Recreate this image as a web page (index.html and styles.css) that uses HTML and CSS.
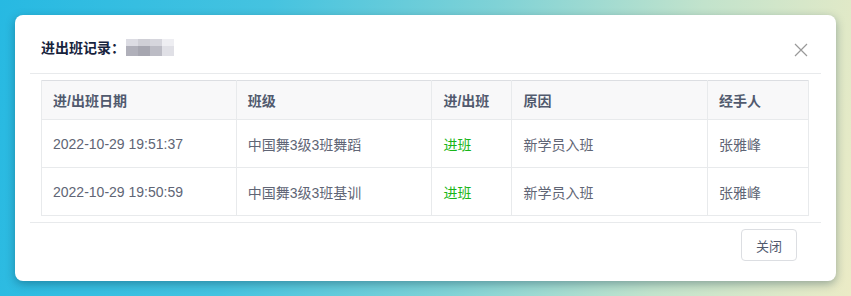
FILE: index.html
```html
<!DOCTYPE html>
<html lang="zh">
<head>
<meta charset="utf-8">
<link rel="stylesheet" href="styles.css">
</head>
<body>
<div class="modal">
  <div class="modal-header">
    <div class="title">进出班记录：<span class="mosaic"><i class="m1"></i><i class="m2"></i><i class="m3"></i><i class="m4"></i><i class="m5"></i><i class="m6"></i><i class="m7"></i><i class="m8"></i></span></div>
    <svg class="close" width="14" height="14" viewBox="0 0 14 14"><path d="M1 1L13 13M13 1L1 13" stroke="#999" stroke-width="1.2" fill="none"/></svg>
  </div>
  <div class="modal-body">
    <table class="tbl">
      <colgroup><col class="c1"><col class="c2"><col class="c3"><col class="c4"><col class="c5"></colgroup>
      <thead>
        <tr><th>进/出班日期</th><th>班级</th><th>进/出班</th><th>原因</th><th>经手人</th></tr>
      </thead>
      <tbody>
        <tr><td>2022-10-29 19:51:37</td><td>中国舞3级3班舞蹈</td><td class="green">进班</td><td>新学员入班</td><td>张雅峰</td></tr>
        <tr><td>2022-10-29 19:50:59</td><td>中国舞3级3班基训</td><td class="green">进班</td><td>新学员入班</td><td>张雅峰</td></tr>
      </tbody>
    </table>
  </div>
  <div class="modal-footer">
    <button class="btn">关闭</button>
  </div>
</div>
</body>
</html>
```
FILE: styles.css
```css
html, body { margin: 0; padding: 0; }
body {
  width: 851px;
  height: 296px;
  overflow: hidden;
  background: linear-gradient(100deg, #27b9e2 0%, #45c3e0 30%, #7fd2d6 55%, #c2e3cc 78%, #ebebc6 100%);
  font-family: "Liberation Sans", "Noto Sans CJK SC", sans-serif;
  padding: 15px 15px 0 15px;
  box-sizing: border-box;
}
.modal {
  width: 821px;
  height: 266px;
  background: #fff;
  border-radius: 8px;
  box-shadow: 0 3px 10px rgba(0, 40, 60, 0.35);
  display: flex;
  flex-direction: column;
}
.modal-header {
  margin: 0 15px;
  height: 59px;
  border-bottom: 1px solid #e8eaec;
  display: flex;
  align-items: center;
  justify-content: space-between;
  box-sizing: border-box;
  padding: 6px 13px 0 11px;
}
.title {
  font-size: 14px;
  font-weight: bold;
  color: #17233d;
  display: flex;
  align-items: center;
}
.mosaic {
  display: grid;
  grid-template-columns: repeat(4, 12px);
  grid-template-rows: 7px 10px;
  margin-left: 1px;
}
.mosaic i { display: block; }
.m1 { background: #dcdce3; }
.m2 { background: #cfcfd6; }
.m3 { background: #d6d6dd; }
.m4 { background: #eeeef2; }
.m5 { background: #b0b0ba; }
.m6 { background: #a6a6b0; }
.m7 { background: #bcbcc5; }
.m8 { background: #e0e0e6; }
.close { display: block; margin-top: 5px; }
.modal-body {
  margin: 0 15px;
  padding: 6px 13px 6px 11px;
  border-bottom: 1px solid #e8eaec;
}
.tbl {
  width: 768px;
  border-collapse: collapse;
  border: 1px solid #dcdee2;
  font-size: 14px;
  color: #515a6e;
}
.c1 { width: 195px; }
.c2 { width: 196px; }
.c3 { width: 80px; }
.c4 { width: 196px; }
.c5 { width: 101px; }
.tbl th {
  height: 38px;
  background: #f8f8f9;
  text-align: left;
  font-weight: bold;
  padding: 0 11px;
  border: 1px solid #e8eaec;
  border-top: 0;
}
.tbl td {
  height: 47px;
  padding: 0 11px;
  border: 1px solid #e8eaec;
  color: #606575;
}
.tbl td.green { color: #19b519; }
.modal-footer {
  display: flex;
  justify-content: flex-end;
  padding: 6px 39px 0 0;
}
.btn {
  width: 56px;
  height: 32px;
  border: 1px solid #dcdee2;
  border-radius: 4px;
  background: #fff;
  font-family: "Liberation Sans", "Noto Sans CJK SC", sans-serif;
  font-size: 13px;
  color: #515a6e;
  padding: 0;
}
```
